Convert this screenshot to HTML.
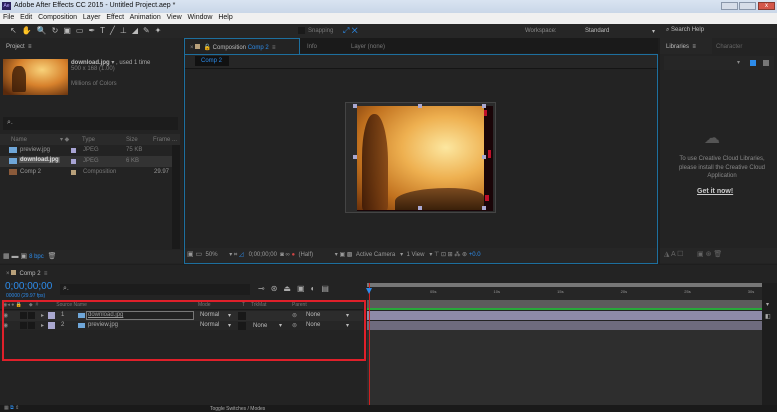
<!DOCTYPE html>
<html><head><meta charset="utf-8"><style>
*{margin:0;padding:0;box-sizing:border-box}
body{width:777px;height:412px;overflow:hidden;background:#1e1e1e;font-family:"Liberation Sans",sans-serif;font-size:6px;color:#9a9a9a;position:relative}
.a{position:absolute;white-space:nowrap}
.b{color:#2d8ceb}
</style></head><body>
<div class="a" style="left:0;top:0;width:777px;height:13px;background:linear-gradient(#d9e4f1,#c9d7e8)"></div>
<div class="a" style="left:2px;top:2px;width:9px;height:8px;background:#2a1f5c;color:#b9a6ff;font-size:5px;line-height:8px;text-align:center">Ae</div>
<div class="a" style="left:14px;top:2px;font-size:7px;color:#111">Adobe After Effects CC 2015 - Untitled Project.aep *</div>
<div class="a" style="left:721px;top:2px;width:17px;height:8px;background:#d6dde8;border:1px solid #8a97aa"></div>
<div class="a" style="left:739px;top:2px;width:17px;height:8px;background:#d6dde8;border:1px solid #8a97aa"></div>
<div class="a" style="left:758px;top:2px;width:17px;height:8px;background:#d4574a;border:1px solid #8a3a30;color:#fff;font-size:6px;text-align:center;line-height:6px">x</div>
<div class="a" style="left:0;top:13px;width:777px;height:11px;background:#f0f0f0"></div>
<div class="a" style="left:3px;top:14px;font-size:7px;color:#111;word-spacing:1px">File&nbsp; Edit&nbsp; Composition&nbsp; Layer&nbsp; Effect&nbsp; Animation&nbsp; View&nbsp; Window&nbsp; Help</div>
<div class="a" style="left:0;top:24px;width:777px;height:14px;background:#262626"></div>
<div class="a" style="left:10px;top:26px;font-size:8px;color:#bbb;letter-spacing:5px">↖✋🔍↻▣▭✒T╱⊥◢✎✦</div>
<div class="a" style="left:298px;top:27px;width:7px;height:7px;background:#1a1a1a"></div>
<div class="a" style="left:308px;top:28px;color:#777">Snapping</div>
<div class="a" style="left:343px;top:26px;color:#2d8ceb;font-size:8px">⤢ ✕</div>
<div class="a" style="left:525px;top:28px;color:#888">Workspace:</div>
<div class="a" style="left:585px;top:28px;color:#bbb">Standard</div>
<div class="a" style="left:652px;top:28px;color:#bbb">▾</div>
<div class="a" style="left:666px;top:27px;color:#bbb">⌕ Search Help</div>
<div class="a" style="left:0;top:38px;width:183px;height:226px;background:#232323"></div>
<div class="a" style="left:6px;top:44px;color:#bbb">Project &nbsp;≡</div>
<div class="a" style="left:3px;top:59px;width:65px;height:36px;background:radial-gradient(ellipse at 60% 30%,#f8d27a,#d7812c 45%,#5a2a0c 90%)"></div>
<div class="a" style="left:12px;top:66px;width:14px;height:26px;background:#3a1b08;border-radius:40% 40% 10% 10%;opacity:.8"></div>
<div class="a" style="left:71px;top:59px;color:#aaa"><b style="color:#bbb">download.jpg</b> ▾ , used 1 time</div>
<div class="a" style="left:71px;top:66px;color:#777">500 x 168 (1.00)</div>
<div class="a" style="left:71px;top:81px;color:#777">Millions of Colors</div>
<div class="a" style="left:3px;top:117px;width:175px;height:13px;background:#1c1c1c"></div>
<div class="a" style="left:7px;top:119px;color:#aaa;font-size:7px">⌕.</div>
<div class="a" style="left:0;top:134px;width:180px;height:11px;background:#2a2a2a"></div>
<div class="a" style="left:11px;top:137px;color:#777">Name</div>
<div class="a" style="left:60px;top:136px;color:#777">▾ ◆</div>
<div class="a" style="left:82px;top:137px;color:#777">Type</div>
<div class="a" style="left:126px;top:137px;color:#777">Size</div>
<div class="a" style="left:153px;top:137px;color:#777">Frame ...</div>
<div class="a" style="left:0;top:156px;width:172px;height:11px;background:#333"></div>
<div class="a" style="left:9px;top:147px;width:8px;height:6px;background:#6fa6d8"></div>
<div class="a" style="left:9px;top:158px;width:8px;height:6px;background:#6fa6d8"></div>
<div class="a" style="left:9px;top:169px;width:8px;height:6px;background:#8a5a3a"></div>
<div class="a" style="left:20px;top:147px;color:#999">preview.jpg</div>
<div class="a" style="left:19px;top:157px;color:#ddd;background:#555;padding:0 1px;font-weight:bold">download.jpg</div>
<div class="a" style="left:20px;top:169px;color:#999">Comp 2</div>
<div class="a" style="left:71px;top:148px;width:5px;height:5px;background:#a8a4d4"></div>
<div class="a" style="left:71px;top:159px;width:5px;height:5px;background:#a8a4d4"></div>
<div class="a" style="left:71px;top:170px;width:5px;height:5px;background:#b8a07a"></div>
<div class="a" style="left:83px;top:147px;color:#777">JPEG</div>
<div class="a" style="left:83px;top:158px;color:#777">JPEG</div>
<div class="a" style="left:83px;top:169px;color:#777">Composition</div>
<div class="a" style="left:126px;top:147px;color:#777">75 KB</div>
<div class="a" style="left:126px;top:158px;color:#777">6 KB</div>
<div class="a" style="left:154px;top:169px;color:#999">29.97</div>
<div class="a" style="left:172px;top:145px;width:8px;height:104px;background:#1a1a1a"></div>
<div class="a" style="left:0;top:250px;width:183px;height:13px;background:#262626"></div>
<div class="a" style="left:3px;top:252px;color:#aaa;font-size:7px">▦ ▬ ▣ <span class="b" style="font-size:6px">8 bpc</span> &nbsp;🗑</div>
<div class="a" style="left:184px;top:38px;width:474px;height:15px;background:#1a1a1a"></div>
<div class="a" style="left:184px;top:38px;width:116px;height:17px;background:#232323;border:1px solid #1d6f9e;border-bottom:none"></div>
<div class="a" style="left:190px;top:44px;color:#888">× <span style="display:inline-block;width:5px;height:5px;background:#b8a07a"></span> &nbsp;🔓 <span style="color:#bbb">Composition</span> <span class="b">Comp 2</span> &nbsp;≡</div>
<div class="a" style="left:307px;top:44px;color:#777">Info</div>
<div class="a" style="left:351px;top:44px;color:#777">Layer (none)</div>
<div class="a" style="left:184px;top:54px;width:474px;height:210px;background:#232323;border:1px solid #1d6f9e"></div>
<div class="a" style="left:185px;top:55px;width:472px;height:14px;background:#262626;border-bottom:1px solid #151515"></div>
<div class="a" style="left:195px;top:56px;width:34px;height:10px;background:#111"></div>
<div class="a" style="left:201px;top:58px"><span class="b">Comp 2</span></div>
<div class="a" style="left:345px;top:102px;width:151px;height:111px;background:#2b2b2b;border:1px solid #444"></div>
<div class="a" style="left:357px;top:106px;width:136px;height:105px;background:#1a0508"></div>
<div class="a" style="left:484px;top:110px;width:3px;height:6px;background:#c0102a"></div>
<div class="a" style="left:488px;top:150px;width:3px;height:8px;background:#c0102a"></div>
<div class="a" style="left:485px;top:195px;width:4px;height:6px;background:#c0102a"></div>
<div class="a" style="left:357px;top:106px;width:127px;height:104px;background:radial-gradient(ellipse at 70% 40%,#fce7a0,#eeb050 35%,#c0701e 70%,#6a300a 100%)"></div>
<div class="a" style="left:362px;top:114px;width:26px;height:96px;background:linear-gradient(90deg,#3a1806,#7a3e12);border-radius:45% 50% 5% 5%;opacity:.85"></div>
<div class="a" style="left:395px;top:188px;width:89px;height:22px;background:linear-gradient(#7a4a20,#3a200a);border-radius:60% 40% 0 0"></div>
<div class="a" style="left:353px;top:104px;width:4px;height:4px;background:#aaa8d0"></div>
<div class="a" style="left:418px;top:104px;width:4px;height:4px;background:#aaa8d0"></div>
<div class="a" style="left:482px;top:104px;width:4px;height:4px;background:#aaa8d0"></div>
<div class="a" style="left:353px;top:155px;width:4px;height:4px;background:#aaa8d0"></div>
<div class="a" style="left:482px;top:155px;width:4px;height:4px;background:#aaa8d0"></div>
<div class="a" style="left:418px;top:206px;width:4px;height:4px;background:#aaa8d0"></div>
<div class="a" style="left:482px;top:206px;width:4px;height:4px;background:#aaa8d0"></div>
<div class="a" style="left:185px;top:248px;width:472px;height:15px;background:#262626"></div>
<div class="a" style="left:187px;top:250px;color:#999"><span style="font-size:7px">▣ ▭</span> &nbsp;50% &nbsp; &nbsp; &nbsp; ▾ ⌗ <span class="b">◿</span> &nbsp; 0;00;00;00 &nbsp;◙ ∞ <span style="color:#c44">●</span> &nbsp;(Half) &nbsp; &nbsp; &nbsp; &nbsp; &nbsp; &nbsp; ▾ ▣ ▩ &nbsp;Active Camera &nbsp; ▾ &nbsp;1 View &nbsp; ▾ ⊤ ⊡ ⊞ ⁂ ⊛ <span class="b">+0.0</span></div>
<div class="a" style="left:660px;top:38px;width:117px;height:226px;background:#232323"></div>
<div class="a" style="left:660px;top:38px;width:52px;height:16px;background:#262626"></div>
<div class="a" style="left:666px;top:44px;color:#bbb">Libraries &nbsp;≡</div>
<div class="a" style="left:716px;top:44px;color:#666">Character</div>
<div class="a" style="left:664px;top:56px;width:110px;height:14px;background:#262626"></div>
<div class="a" style="left:737px;top:59px;color:#888">▾</div>
<div class="a" style="left:750px;top:60px;width:6px;height:6px;background:#2d8ceb"></div>
<div class="a" style="left:763px;top:60px;width:6px;height:6px;background:#777"></div>
<div class="a" style="left:704px;top:128px;width:24px;height:18px;color:#555;font-size:16px">☁</div>
<div class="a" style="left:672px;top:155px;width:100px;text-align:center;color:#888;white-space:normal;line-height:8.5px">To use Creative Cloud Libraries, please install the Creative Cloud Application</div>
<div class="a" style="left:697px;top:188px;color:#ccc;text-decoration:underline;font-weight:bold;font-size:7px">Get it now!</div>
<div class="a" style="left:660px;top:248px;width:117px;height:15px;background:#262626"></div>
<div class="a" style="left:664px;top:250px;color:#666;font-size:7px">◮ A ☐ &nbsp; &nbsp; &nbsp; ▣ ⊛ 🗑</div>
<div class="a" style="left:0;top:265px;width:777px;height:147px;background:#232323"></div>
<div class="a" style="left:6px;top:270px;color:#888">× <span style="display:inline-block;width:5px;height:5px;background:#b8a07a"></span> &nbsp;<span style="color:#bbb">Comp 2</span> &nbsp;≡</div>
<div class="a" style="left:5px;top:281px;color:#2d8ceb;font-size:10px">0;00;00;00</div>
<div class="a" style="left:6px;top:293px;color:#2d8ceb;font-size:5px">00000 (29.97 fps)</div>
<div class="a" style="left:60px;top:284px;width:190px;height:11px;background:#1c1c1c"></div>
<div class="a" style="left:63px;top:285px;color:#aaa;font-size:7px">⌕.</div>
<div class="a" style="left:258px;top:284px;color:#aaa;font-size:8px;letter-spacing:6px">⊸⊛⏏▣◐▤</div>
<div class="a" style="left:0;top:300px;width:363px;height:10px;background:#282828;border-bottom:1px solid #1a1a1a"></div>
<div class="a" style="left:3px;top:302px;color:#777;font-size:5px">◉◂ ● 🔒 &nbsp; &nbsp; ◆ &nbsp;# &nbsp; &nbsp; &nbsp; &nbsp; &nbsp; &nbsp; Source Name</div>
<div class="a" style="left:198px;top:302px;color:#777;font-size:5px">Mode</div>
<div class="a" style="left:242px;top:302px;color:#777;font-size:5px">T</div>
<div class="a" style="left:251px;top:302px;color:#777;font-size:5px">TrkMat</div>
<div class="a" style="left:292px;top:302px;color:#777;font-size:5px">Parent</div>
<div class="a" style="left:0;top:311px;width:363px;height:10px;background:#2c2c2c"></div>
<div class="a" style="left:0;top:321px;width:363px;height:9px;background:#262626"></div>
<div class="a" style="left:3px;top:312px;color:#888;font-size:6px">◉</div>
<div class="a" style="left:3px;top:322px;color:#888;font-size:6px">◉</div>
<div class="a" style="left:20px;top:312px;width:7px;height:7px;background:#181818"></div>
<div class="a" style="left:28px;top:312px;width:7px;height:7px;background:#181818"></div>
<div class="a" style="left:20px;top:322px;width:7px;height:7px;background:#181818"></div>
<div class="a" style="left:28px;top:322px;width:7px;height:7px;background:#181818"></div>
<div class="a" style="left:41px;top:312px;color:#999">▸</div>
<div class="a" style="left:41px;top:322px;color:#999">▸</div>
<div class="a" style="left:48px;top:312px;width:7px;height:7px;background:#aaa8d0"></div>
<div class="a" style="left:48px;top:322px;width:7px;height:7px;background:#aaa8d0"></div>
<div class="a" style="left:61px;top:312px;color:#aaa">1</div>
<div class="a" style="left:61px;top:322px;color:#aaa">2</div>
<div class="a" style="left:78px;top:313px;width:7px;height:5px;background:#6fa6d8"></div>
<div class="a" style="left:78px;top:323px;width:7px;height:5px;background:#6fa6d8"></div>
<div class="a" style="left:86px;top:311px;width:108px;height:9px;border:1px solid #777;background:#222"></div>
<div class="a" style="left:88px;top:312px;color:#999;text-decoration:underline">download.jpg</div>
<div class="a" style="left:88px;top:322px;color:#aaa">preview.jpg</div>
<div class="a" style="left:200px;top:312px;color:#bbb">Normal</div>
<div class="a" style="left:200px;top:322px;color:#bbb">Normal</div>
<div class="a" style="left:228px;top:312px;color:#bbb">▾</div>
<div class="a" style="left:228px;top:322px;color:#bbb">▾</div>
<div class="a" style="left:238px;top:312px;width:8px;height:8px;background:#181818"></div>
<div class="a" style="left:238px;top:322px;width:8px;height:8px;background:#181818"></div>
<div class="a" style="left:253px;top:322px;color:#bbb">None &nbsp; &nbsp; &nbsp; ▾</div>
<div class="a" style="left:292px;top:312px;color:#999">⊚</div>
<div class="a" style="left:292px;top:322px;color:#999">⊚</div>
<div class="a" style="left:306px;top:312px;color:#bbb">None</div>
<div class="a" style="left:306px;top:322px;color:#bbb">None</div>
<div class="a" style="left:346px;top:312px;color:#bbb">▾</div>
<div class="a" style="left:346px;top:322px;color:#bbb">▾</div>
<div class="a" style="left:2px;top:300px;width:364px;height:61px;border:2px solid #e0202a"></div>
<div class="a" style="left:367px;top:283px;width:395px;height:4px;background:#777"></div>
<div class="a" style="left:367px;top:287px;width:395px;height:13px;background:#262626"></div>
<div class="a" style="left:430px;top:289px;color:#999;font-size:4px;word-spacing:56px">05s 10s 15s 20s 25s 30s</div>
<div class="a" style="left:367px;top:300px;width:395px;height:8px;background:#5c5c5c"></div>
<div class="a" style="left:367px;top:308px;width:395px;height:2px;background:#28a83a"></div>
<div class="a" style="left:367px;top:311px;width:395px;height:9px;background:#8e8aa8"></div>
<div class="a" style="left:367px;top:321px;width:395px;height:9px;background:#6e6b7e"></div>
<div class="a" style="left:367px;top:330px;width:395px;height:75px;background:#2e2e2e"></div>
<div class="a" style="left:369px;top:283px;width:1px;height:122px;background:#d02020"></div>
<div class="a" style="left:366px;top:288px;width:6px;height:6px;background:#2d8ceb;clip-path:polygon(0 0,100% 0,50% 100%)"></div>
<div class="a" style="left:762px;top:283px;width:15px;height:122px;background:#1e1e1e"></div>
<div class="a" style="left:766px;top:301px;color:#aaa">▾</div>
<div class="a" style="left:765px;top:313px;color:#aaa">◧</div>
<div class="a" style="left:0;top:405px;width:777px;height:7px;background:#1a1a1a"></div>
<div class="a" style="left:4px;top:405px;color:#888;font-size:5px">▦ <span class="b">⧉</span> ⇕</div>
<div class="a" style="left:210px;top:406px;color:#aaa;font-size:5px">Toggle Switches / Modes</div>
</body></html>
